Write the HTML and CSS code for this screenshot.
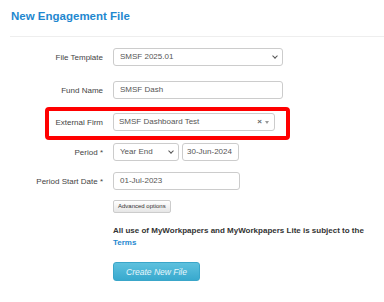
FILE: index.html
```html
<!DOCTYPE html>
<html lang="en">
<head>
    <meta charset="UTF-8">
    <meta name="viewport" content="width=device-width, initial-scale=1.0">
    <title>New Engagement File</title>
    <link rel="stylesheet" href="styles.css">
</head>
<body>
    <div class="page">
        <h1>New Engagement File</h1>
        <hr>

        <form class="form">
            <div class="row row-1">
                <label>File Template</label>
                <div class="control select wide">SMSF 2025.01<span class="chev"></span></div>
            </div>
            <div class="row row-2">
                <label>Fund Name</label>
                <div class="control wide">SMSF Dash</div>
            </div>
            <div class="row row-3 highlight">
                <label>External Firm</label>
                <div class="control firm">SMSF Dashboard Test<span class="clear">×</span><span class="caret"></span></div>
            </div>
            <div class="row row-4">
                <label>Period *</label>
                <div class="pair">
                    <div class="control select period">Year End<span class="chev"></span></div>
                    <div class="control date">30-Jun-2024</div>
                </div>
            </div>
            <div class="row row-5">
                <label>Period Start Date *</label>
                <div class="control start">01-Jul-2023</div>
            </div>
            <div class="row row-6">
                <span></span>
                <div class="cell"><button type="button" class="btn-small">Advanced options</button></div>
            </div>
            <div class="row row-7">
                <span></span>
                <p class="terms">All use of MyWorkpapers and MyWorkpapers Lite is subject to the <a href="#">Terms</a></p>
            </div>
            <div class="row">
                <span></span>
                <div class="cell"><button type="button" class="btn-create">Create New File</button></div>
            </div>
        </form>
    </div>
</body>
</html>
```

FILE: styles.css
```css
body {
    margin: 0;
    background: #fff;
    font-family: "Liberation Sans", Arial, sans-serif;
    color: #333;
}
.page {
    padding: 0 0 0 10px;
}
h1 {
    margin: 0;
    padding: 8px 0 0 1px;
    font-size: 11.5px;
    line-height: 16px;
    color: #1f88cf;
}
hr {
    margin: 12px 0 0 0;
    border: none;
    border-top: 1px solid #eeeeee;
}
.form {
    margin-top: 11px;
}
.row {
    display: grid;
    grid-template-columns: 93px 1fr;
    column-gap: 10px;
    align-items: center;
    margin-bottom: 11px;
}
.row-1 { margin-bottom: 15px; }
.row-2 { margin-bottom: 14px; }
.row-3 { margin-bottom: 12px; }
.row-5 { margin-bottom: 10px; }
.row-6 { margin-bottom: 12px; }
.row-7 { margin-bottom: 13px; }
.cell {
    display: flex;
}
label {
    text-align: right;
    font-size: 8px;
    color: #444;
}
.control {
    position: relative;
    box-sizing: border-box;
    height: 18px;
    line-height: 16px;
    padding: 0 6px;
    border: 1px solid #ccc;
    border-radius: 3px;
    background: #fff;
    font-size: 8px;
    color: #555;
    white-space: nowrap;
}
.wide { width: 170px; }
.firm { width: 162px; padding-left: 5px; }
.period { width: 66px; }
.date { width: 57px; padding: 0 4px; }
.start { width: 127px; }
.pair {
    display: flex;
    gap: 3px;
}
.chev {
    position: absolute;
    right: 5px;
    top: 5px;
    width: 3px;
    height: 3px;
    border-right: 1px solid #555;
    border-bottom: 1px solid #555;
    transform: rotate(45deg);
}
.clear {
    position: absolute;
    right: 12px;
    top: 0;
    font-size: 8px;
    font-weight: bold;
    color: #666;
}
.caret {
    position: absolute;
    right: 5px;
    top: 7px;
    border-left: 2.5px solid transparent;
    border-right: 2.5px solid transparent;
    border-top: 3px solid #999;
}
.highlight {
    position: relative;
}
.highlight::after {
    content: "";
    position: absolute;
    left: 35px;
    right: 94px;
    top: -6px;
    bottom: -9px;
    border: 4px solid #f00;
    border-radius: 4px;
    pointer-events: none;
}
.btn-small {
    height: 13px;
    padding: 0 4px;
    border: 1px solid #ccc;
    border-radius: 2px;
    background: linear-gradient(#fff, #e6e6e6);
    font-family: "Liberation Sans", Arial, sans-serif;
    font-size: 6px;
    color: #333;
    line-height: 11px;
}
.terms {
    margin: 0;
    font-size: 8px;
    font-weight: bold;
    line-height: 12px;
    color: #333;
}
.terms a {
    color: #1f88cf;
    text-decoration: none;
}
.btn-create {
    width: 87px;
    height: 19px;
    border: 1px solid #3aa6c9;
    border-radius: 3px;
    background: linear-gradient(#5ec1de, #38a9ce);
    font-family: "Liberation Sans", Arial, sans-serif;
    font-size: 8.5px;
    font-style: italic;
    color: #e8f6fb;
    padding: 0;
}
```
